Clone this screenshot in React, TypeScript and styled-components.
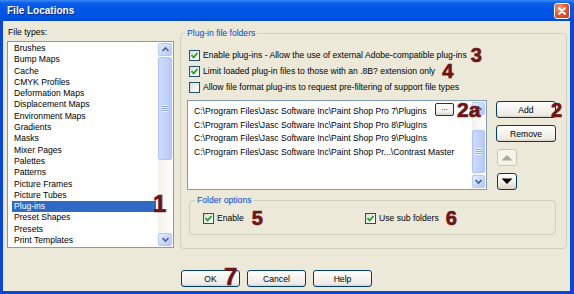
import React from "react";
import styled, { createGlobalStyle } from "styled-components";

const FONT = `"Liberation Sans", Arial, sans-serif`;

const GlobalStyle = createGlobalStyle`
  html, body { margin: 0; padding: 0; background: #ECE9D8; }
  body { font-family: ${FONT}; }
  * { box-sizing: border-box; }
`;

const Window = styled.div`
  width: 574px;
  height: 294px;
  display: flex;
  flex-direction: column;
  overflow: hidden;
  font-family: ${FONT};
  font-size: 8.6px;
  color: #000;
`;

const TitleBar = styled.div`
  height: 21px;
  flex: none;
  display: flex;
  align-items: center;
  justify-content: space-between;
  padding: 0 4px 0 7px;
  background: linear-gradient(to bottom, #3B8AF6 0%, #0C5FEA 14%, #0055E5 45%, #0054E2 80%, #0348CC 100%);
`;

const Title = styled.span`
  color: #fff;
  font-weight: bold;
  font-size: 10px;
  text-shadow: 1px 1px 0 #0B2B8A;
`;

const CloseButton = styled.div`
  width: 16px;
  height: 16px;
  border: 1px solid #fff;
  border-radius: 3px;
  background: radial-gradient(circle at 35% 30%, #F4A487 0%, #E25A33 45%, #C23A12 100%);
  display: flex;
  align-items: center;
  justify-content: center;
`;

const Frame = styled.div`
  flex: 1;
  display: flex;
  flex-direction: column;
  background: #ECE9D8;
  border-left: 3px solid #0846D8;
  border-right: 4px solid #0846D8;
  border-bottom: 3px solid #0846D8;
  padding: 6px 3px 0 4px;
`;

const MainRow = styled.div`
  display: flex;
  gap: 6px;
  height: 222px;
`;

const LeftColumn = styled.div`
  width: 167px;
  flex: none;
  display: flex;
  flex-direction: column;
`;

const FieldLabel = styled.div`
  height: 11px;
  line-height: 11px;
  margin-bottom: 3px;
  padding-left: 1px;
`;

const ListBox = styled.div<{ $w?: number; $h?: number }>`
  position: relative;
  ${(p) => (p.$w ? `width: ${p.$w}px; flex: none;` : "")}
  ${(p) => (p.$h ? `height: ${p.$h}px;` : "height: 207px;")}
  border: 1px solid #7F9DB9;
  background: #fff;
  padding: 1px;
  display: flex;
`;

const Items = styled.div<{ $pt?: number }>`
  flex: 1;
  min-width: 0;
  padding: ${(p) => p.$pt ?? 0}px 2px 0 3px;
  display: flex;
  flex-direction: column;
`;

const Item = styled.div<{ $selected?: boolean; $h: number }>`
  height: ${(p) => p.$h}px;
  line-height: ${(p) => p.$h}px;
  padding-left: 2px;
  white-space: nowrap;
  display: flex;
  align-items: center;
  background: ${(p) => (p.$selected ? "#316AC5" : "transparent")};
  color: ${(p) => (p.$selected ? "#fff" : "#000")};
`;

const Scrollbar = styled.div<{ $w: number }>`
  width: ${(p) => p.$w}px;
  flex: none;
  display: flex;
  flex-direction: column;
  background: linear-gradient(to right, #F3F1EA, #FEFEFB);
`;

const ScrollArrow = styled.div`
  height: 13px;
  flex: none;
  border: 1px solid #B4C8F6;
  border-radius: 2px;
  background: linear-gradient(135deg, #E4ECFE 0%, #C6D6FC 60%, #B3C7F5 100%);
  display: flex;
  align-items: center;
  justify-content: center;
`;

const Track = styled.div`
  flex: 1;
  display: flex;
  flex-direction: column;
`;

const Thumb = styled.div<{ $top: number; $h: number }>`
  margin-top: ${(p) => p.$top}px;
  height: ${(p) => p.$h}px;
  border: 1px solid #AFC4F3;
  border-radius: 2px;
  background: linear-gradient(to right, #CCDAFD 0%, #C2D3FC 50%, #B6CAF7 100%);
  display: flex;
  align-items: center;
  justify-content: center;
`;

const Grip = styled.div`
  width: 6px;
  height: 7px;
  background: repeating-linear-gradient(to bottom, #EEF3FF 0 1px, #8CA8E8 1px 2px);
`;

const Group = styled.div`
  flex: 1;
  margin-top: 6px;
  border: 1px solid #D0D0BF;
  border-radius: 4px;
  padding: 0 10px 0 6px;
  display: flex;
  flex-direction: column;
`;

const GroupTitle = styled.div<{ $ml: number }>`
  align-self: flex-start;
  margin: -6px 0 0 ${(p) => p.$ml}px;
  height: 11px;
  line-height: 11px;
  padding: 0 2px;
  background: #ECE9D8;
  color: #0046D5;
`;

const CheckList = styled.div`
  margin-top: 8px;
  display: flex;
  flex-direction: column;
`;

const CheckRow = styled.label`
  height: 16px;
  display: flex;
  align-items: center;
  gap: 3px;
  padding-left: 2px;
  white-space: nowrap;
`;

const Box = styled.span`
  width: 11px;
  height: 11px;
  flex: none;
  border: 1px solid #1C5180;
  background: linear-gradient(135deg, #DCDCD7 0%, #F3F3EF 60%, #FFFFFF 100%);
  display: flex;
  align-items: center;
  justify-content: center;
`;

const PathsRow = styled.div`
  margin-top: 5px;
  display: flex;
  gap: 9px;
`;

const SideColumn = styled.div`
  position: relative;
  width: 60px;
  flex: none;
  display: flex;
  flex-direction: column;
  align-items: flex-start;
  gap: 7px;
  padding-top: 1px;
`;

const Button = styled.button<{ $w: number }>`
  width: ${(p) => p.$w}px;
  height: 17px;
  flex: none;
  padding: 0;
  border: 1px solid #003C74;
  border-radius: 3px;
  background: linear-gradient(to bottom, #FFFFFF 0%, #F6F5F1 40%, #ECEBE6 85%, #D8D2C6 100%);
  font-family: ${FONT};
  font-size: 8.6px;
  color: #000;
`;

const ArrowButton = styled.button<{ $disabled?: boolean }>`
  width: 20px;
  height: 17px;
  margin-left: 1px;
  padding: 0;
  border: 1px solid ${(p) => (p.$disabled ? "#C9C7BA" : "#003C74")};
  border-radius: 3px;
  background: ${(p) =>
    p.$disabled ? "#F5F4EA" : "linear-gradient(to bottom, #FFFFFF 0%, #F4F3EE 50%, #D9D4C8 100%)"};
  display: flex;
  align-items: center;
  justify-content: center;
`;

const BrowseButton = styled.button`
  width: 19px;
  height: 13px;
  flex: none;
  margin: -2px 16px 0 auto;
  align-self: flex-start;
  padding: 0 0 3px;
  border: 1px solid #003C74;
  border-radius: 2px;
  background: linear-gradient(to bottom, #FFFFFF 0%, #F1F0EA 70%, #DAD5CA 100%);
  font-family: ${FONT};
  font-size: 8px;
  line-height: 8px;
  color: #000;
`;

const FolderGroup = styled.div`
  margin: 10px 0 0 2px;
  height: 35px;
  border: 1px solid #D0D0BF;
  border-radius: 4px;
  padding: 0 0 0 11px;
  display: flex;
  flex-direction: column;
`;

const OptionsRow = styled.div`
  margin-top: 4px;
  display: grid;
  grid-template-columns: 162px auto;
`;

const Footer = styled.div`
  position: relative;
  margin-top: 21px;
  display: flex;
  gap: 7px;
  padding-left: 174px;
`;

const Mark = styled.span<{ $size?: number; $ml?: number }>`
  font-family: ${FONT};
  font-weight: bold;
  font-size: ${(p) => p.$size ?? 20}px;
  line-height: 1;
  color: #6E1515;
  -webkit-text-stroke: 0.7px #6E1515;
  margin-left: ${(p) => p.$ml ?? 0}px;
`;

const OverlayMark = styled(Mark)<{ $x: number; $y: number }>`
  position: absolute;
  left: ${(p) => p.$x}px;
  top: ${(p) => p.$y}px;
  pointer-events: none;
`;

const Chevron = ({ down }: { down?: boolean }) => (
  <svg width="9" height="9" viewBox="0 0 9 9">
    <path
      d={down ? "M1.5 3 L4.5 6 L7.5 3" : "M1.5 6 L4.5 3 L7.5 6"}
      fill="none"
      stroke="#4D6185"
      strokeWidth="1.6"
    />
  </svg>
);

const Check = () => (
  <svg width="9" height="9" viewBox="0 0 9 9">
    <path d="M1.5 4.2 L3.6 6.4 L7.6 2" fill="none" stroke="#21A121" strokeWidth="1.7" />
  </svg>
);

const CheckBox = ({ checked }: { checked?: boolean }) => <Box>{checked ? <Check /> : null}</Box>;

const fileTypes = [
  "Brushes",
  "Bump Maps",
  "Cache",
  "CMYK Profiles",
  "Deformation Maps",
  "Displacement Maps",
  "Environment Maps",
  "Gradients",
  "Masks",
  "Mixer Pages",
  "Palettes",
  "Patterns",
  "Picture Frames",
  "Picture Tubes",
  "Plug-ins",
  "Preset Shapes",
  "Presets",
  "Print Templates",
];

const paths = [
  "C:\\Program Files\\Jasc Software Inc\\Paint Shop Pro 7\\Plugins",
  "C:\\Program Files\\Jasc Software Inc\\Paint Shop Pro 8\\PlugIns",
  "C:\\Program Files\\Jasc Software Inc\\Paint Shop Pro 9\\PlugIns",
  "C:\\Program Files\\Jasc Software Inc\\Paint Shop Pr...\\Contrast Master",
];

export default function App() {
  return (
    <>
      <GlobalStyle />
      <Window>
        <TitleBar>
          <Title>File Locations</Title>
          <CloseButton>
            <svg width="10" height="10" viewBox="0 0 10 10">
              <path d="M2 2 L8 8 M8 2 L2 8" stroke="#fff" strokeWidth="1.8" strokeLinecap="round" />
            </svg>
          </CloseButton>
        </TitleBar>
        <Frame>
          <MainRow>
            <LeftColumn>
              <FieldLabel>File types:</FieldLabel>
              <ListBox>
                <Items>
                  {fileTypes.map((t) => (
                    <Item key={t} $h={11.3} $selected={t === "Plug-ins"}>
                      {t}
                    </Item>
                  ))}
                </Items>
                <Scrollbar $w={14}>
                  <ScrollArrow>
                    <Chevron />
                  </ScrollArrow>
                  <Track>
                    <Thumb $top={1} $h={103}>
                      <Grip />
                    </Thumb>
                  </Track>
                  <ScrollArrow>
                    <Chevron down />
                  </ScrollArrow>
                </Scrollbar>
                <OverlayMark $size={24} $x={145} $y={150}>
                  1
                </OverlayMark>
              </ListBox>
            </LeftColumn>
            <Group>
              <GroupTitle $ml={-2}>Plug-in file folders</GroupTitle>
              <CheckList>
                <CheckRow>
                  <CheckBox checked />
                  Enable plug-ins - Allow the use of external Adobe-compatible plug-ins
                  <Mark $ml={1}>3</Mark>
                </CheckRow>
                <CheckRow>
                  <CheckBox checked />
                  Limit loaded plug-in files to those with an .8B? extension only
                  <Mark $ml={4}>4</Mark>
                </CheckRow>
                <CheckRow>
                  <CheckBox />
                  Allow file format plug-ins to request pre-filtering of support file types
                </CheckRow>
              </CheckList>
              <PathsRow>
                <ListBox $w={300} $h={90}>
                  <Items $pt={3}>
                    {paths.map((p, i) => (
                      <Item key={p} $h={13.7}>
                        {p}
                        {i === 0 ? <BrowseButton>...</BrowseButton> : null}
                      </Item>
                    ))}
                  </Items>
                  <Scrollbar $w={13}>
                    <ScrollArrow>
                      <Chevron />
                    </ScrollArrow>
                    <Track>
                      <Thumb $top={15} $h={43}>
                        <Grip />
                      </Thumb>
                    </Track>
                    <ScrollArrow>
                      <Chevron down />
                    </ScrollArrow>
                  </Scrollbar>
                  <OverlayMark $size={21} $x={269} $y={-2}>
                    2a
                  </OverlayMark>
                </ListBox>
                <SideColumn>
                  <Button $w={60}>Add</Button>
                  <Button $w={60}>Remove</Button>
                  <ArrowButton $disabled>
                    <svg width="12" height="7" viewBox="0 0 12 7">
                      <path d="M0.5 6.5 L6 1 L11.5 6.5 Z" fill="#ACA899" />
                    </svg>
                  </ArrowButton>
                  <ArrowButton>
                    <svg width="12" height="7" viewBox="0 0 12 7">
                      <path d="M0.5 0.5 L6 6 L11.5 0.5 Z" fill="#000" />
                    </svg>
                  </ArrowButton>
                  <OverlayMark $x={55} $y={0}>
                    2
                  </OverlayMark>
                </SideColumn>
              </PathsRow>
              <FolderGroup>
                <GroupTitle $ml={-6}>Folder options</GroupTitle>
                <OptionsRow>
                  <CheckRow>
                    <CheckBox checked />
                    Enable
                    <Mark $ml={5}>5</Mark>
                  </CheckRow>
                  <CheckRow>
                    <CheckBox checked />
                    Use sub folders
                    <Mark $ml={4}>6</Mark>
                  </CheckRow>
                </OptionsRow>
              </FolderGroup>
            </Group>
          </MainRow>
          <Footer>
            <Button $w={59}>OK</Button>
            <Button $w={59}>Cancel</Button>
            <Button $w={59}>Help</Button>
            <OverlayMark $size={24} $x={217} $y={-5}>
              7
            </OverlayMark>
          </Footer>
        </Frame>
      </Window>
    </>
  );
}
